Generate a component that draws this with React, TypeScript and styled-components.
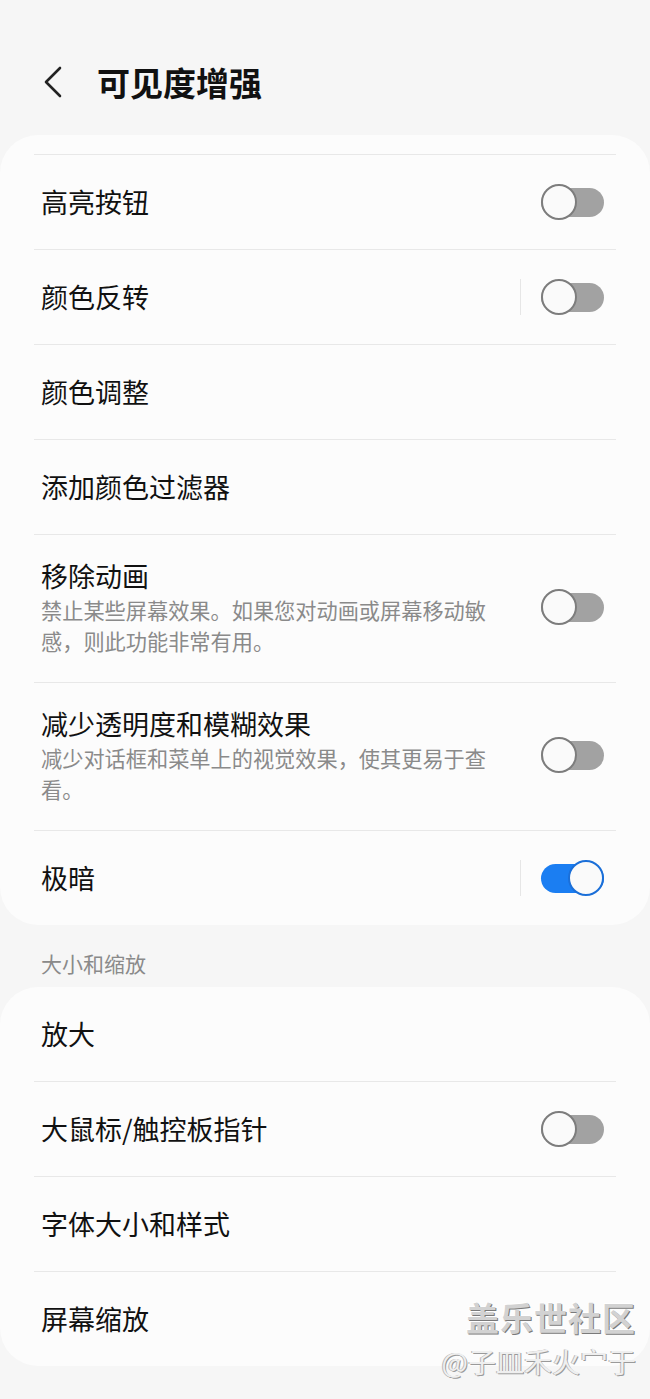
import * as React from 'react';
import styled, { createGlobalStyle } from 'styled-components';

const GlobalStyle = createGlobalStyle`
  html, body {
    margin: 0;
    padding: 0;
    background: #f6f6f6;
    font-family: "Noto Sans CJK SC", "Noto Sans", sans-serif;
    -webkit-font-smoothing: antialiased;
  }
`;

const Page = styled.div`
  position: relative;
  width: 650px;
  min-height: 1399px;
  background: #f6f6f6;
  overflow: hidden;
`;

const Header = styled.header`
  display: flex;
  align-items: center;
  height: 48px;
  margin: 58px 0 29px;
  padding-left: 42px;
`;

const BackButton = styled.button`
  display: flex;
  align-items: center;
  justify-content: center;
  width: 22px;
  height: 34px;
  padding: 0;
  border: none;
  background: none;
  margin-right: 33px;
`;

const Title = styled.h1`
  margin: 0;
  font-size: 33px;
  font-weight: 700;
  color: #111;
`;

const Card = styled.section<{ $topLine?: boolean }>`
  background: #fcfcfc;
  border-radius: 38px;
  padding: ${p => (p.$topLine ? '19px' : '0')} 34px 0;
`;

const TopLine = styled.div`
  height: 1px;
  background: #e8e8e8;
`;

const Row = styled.div<{ $last?: boolean; $tall?: boolean }>`
  display: flex;
  align-items: center;
  min-height: ${p => (p.$tall ? '148px' : p.$last ? '94px' : '95px')};
  box-sizing: border-box;
  padding: ${p => (p.$tall ? '23px 12px 26px 7px' : '0 12px 0 7px')};
  border-bottom: ${p => (p.$last ? 'none' : '1px solid #e8e8e8')};
`;

const TextBlock = styled.div`
  flex: 1;
  display: flex;
  flex-direction: column;
`;

const RowTitle = styled.div`
  font-size: 27px;
  line-height: 36px;
  color: #111;
`;

const RowSub = styled.div`
  font-size: 21.2px;
  line-height: 31px;
  color: #8a8a8a;
  max-width: 460px;
`;

const Divider = styled.div`
  width: 1px;
  height: 36px;
  background: #e6e6e6;
  margin-right: 20px;
`;

const Track = styled.div<{ $on: boolean }>`
  position: relative;
  width: 63px;
  height: 29px;
  border-radius: 15px;
  background: ${p => (p.$on ? '#1b7ef2' : '#a2a2a2')};
`;

const Knob = styled.div<{ $on: boolean }>`
  position: absolute;
  top: -3.5px;
  ${p => (p.$on ? 'right: 0;' : 'left: 0;')}
  width: 36px;
  height: 36px;
  box-sizing: border-box;
  border-radius: 50%;
  background: #fafafa;
  border: 2px solid ${p => (p.$on ? '#1b6fd8' : '#7d7d7d')};
`;

const SectionHeader = styled.div`
  padding: 24px 0 10px 41px;
  font-size: 21px;
  line-height: 28px;
  color: #8a8a8a;
`;

const Watermark = styled.div`
  position: absolute;
  right: 14px;
  bottom: 21px;
  display: flex;
  flex-direction: column;
  align-items: flex-end;
  gap: 7px;
`;

const MarkTitle = styled.div`
  font-size: 33px;
  line-height: 40px;
  font-weight: 700;
  color: #d2d2d2;
  letter-spacing: 1px;
  text-shadow: 1px 1px 0 #7a7a7a, -1px -1px 0 #ffffff;
`;

const MarkUser = styled.div`
  font-size: 28px;
  line-height: 34px;
  color: #efefef;
  text-shadow: 1px 1px 0 #9a9a9a, -1px 0 0 #b8b8b8;
`;

const Toggle = ({ on }: { on: boolean }) => (
  <Track $on={on}>
    <Knob $on={on} />
  </Track>
);

type Item = {
  title: string;
  sub?: string;
  toggle?: boolean;
  on?: boolean;
  divider?: boolean;
};

const visibility: Item[] = [
  { title: '高亮按钮', toggle: true },
  { title: '颜色反转', toggle: true, divider: true },
  { title: '颜色调整' },
  { title: '添加颜色过滤器' },
  {
    title: '移除动画',
    sub: '禁止某些屏幕效果。如果您对动画或屏幕移动敏感，则此功能非常有用。',
    toggle: true,
  },
  {
    title: '减少透明度和模糊效果',
    sub: '减少对话框和菜单上的视觉效果，使其更易于查看。',
    toggle: true,
  },
  { title: '极暗', toggle: true, on: true, divider: true },
];

const sizing: Item[] = [
  { title: '放大' },
  { title: '大鼠标/触控板指针', toggle: true },
  { title: '字体大小和样式' },
  { title: '屏幕缩放' },
];

const renderRows = (items: Item[]) =>
  items.map((it, i) => (
    <Row key={it.title} $last={i === items.length - 1} $tall={!!it.sub}>
      <TextBlock>
        <RowTitle>{it.title}</RowTitle>
        {it.sub && <RowSub>{it.sub}</RowSub>}
      </TextBlock>
      {it.divider && <Divider />}
      {it.toggle && <Toggle on={!!it.on} />}
    </Row>
  ));

export default function App() {
  return (
    <Page>
      <GlobalStyle />
      <Header>
        <BackButton aria-label="返回">
          <svg width="20" height="32" viewBox="0 0 20 32">
            <polyline
              points="17,2 3,16 17,30"
              fill="none"
              stroke="#222"
              strokeWidth="2.6"
              strokeLinecap="round"
              strokeLinejoin="round"
            />
          </svg>
        </BackButton>
        <Title>可见度增强</Title>
      </Header>
      <Card $topLine>
        <TopLine />
        {renderRows(visibility)}
      </Card>
      <SectionHeader>大小和缩放</SectionHeader>
      <Card>{renderRows(sizing)}</Card>
      <Watermark>
        <MarkTitle>盖乐世社区</MarkTitle>
        <MarkUser>@子皿禾火宀于</MarkUser>
      </Watermark>
    </Page>
  );
}
